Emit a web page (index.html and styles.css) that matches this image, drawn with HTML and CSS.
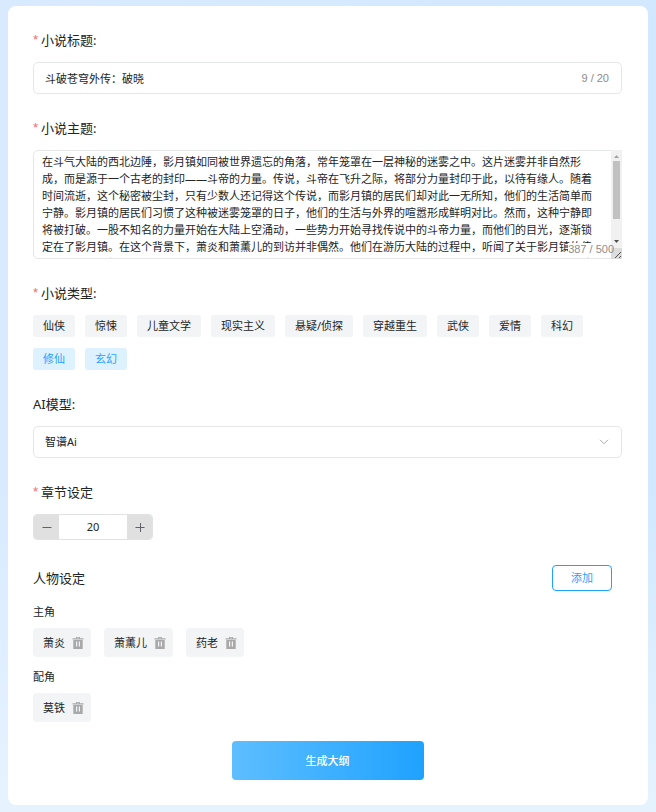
FILE: index.html
```html
<!DOCTYPE html>
<html lang="zh-CN">
<head>
  <meta charset="utf-8">
  <meta name="viewport" content="width=device-width, initial-scale=1">
  <title>小说设定</title>
  <link rel="stylesheet" href="styles.css">
</head>
<body>
  <svg class="sprite" aria-hidden="true">
    <symbol id="trash" viewBox="0 0 12 12">
      <path fill-rule="evenodd" d="M4 0h4v1.200h3.500v1.300H.5V1.200H4zM5 .8v.5h2V.8zM1.300 3h9.400v9H1.300zM4 4.500v5h1.200v-5zM6.800 4.500v5H8v-5z"/>
    </symbol>
  </svg>
  <form class="card">
    <div class="field">
      <label class="label required" for="title">小说标题:</label>
      <div class="input-box">
        <input class="input" id="title" type="text" maxlength="20" value="斗破苍穹外传：破晓">
        <span class="count">9 / 20</span>
      </div>
    </div>

    <div class="field">
      <label class="label required" for="theme">小说主题:</label>
      <div class="textarea-box">
        <textarea class="textarea" id="theme" maxlength="500">在斗气大陆的西北边陲，影月镇如同被世界遗忘的角落，常年笼罩在一层神秘的迷雾之中。这片迷雾并非自然形成，而是源于一个古老的封印——斗帝的力量。传说，斗帝在飞升之际，将部分力量封印于此，以待有缘人。随着时间流逝，这个秘密被尘封，只有少数人还记得这个传说，而影月镇的居民们却对此一无所知，他们的生活简单而宁静。影月镇的居民们习惯了这种被迷雾笼罩的日子，他们的生活与外界的喧嚣形成鲜明对比。然而，这种宁静即将被打破。一股不知名的力量开始在大陆上空涌动，一些势力开始寻找传说中的斗帝力量，而他们的目光，逐渐锁定在了影月镇。在这个背景下，萧炎和萧薰儿的到访并非偶然。他们在游历大陆的过程中，听闻了关于影月镇的传说，心中充满好奇，他们特别到此，萧炎怀揣着这个未解的谜团，不曾想，这个看似普通的小镇里，隐藏着足以改变整个大陆命运的秘密。</textarea>
        <svg class="scrollbar" viewBox="0 0 11 109" aria-hidden="true">
          <path class="track" d="M0 0h11v109H0z"/>
          <path class="thumb" d="M2 11h7v58H2z"/>
          <path class="arrow-off" d="M3 8l2.500-3L8 8z"/>
          <path class="arrow" d="M3 90h5l-2.500 3z"/>
          <path class="corner" d="M0 98h11v11H0z"/>
          <path class="grip" d="M4 108l6-6M8 108l2-2"/>
        </svg>
        <span class="count count-over">387 / 500</span>
      </div>
    </div>

    <div class="field">
      <span class="label required" id="genre">小说类型:</span>
      <div class="tags" role="group" aria-labelledby="genre">
        <button class="tag" type="button">仙侠</button>
        <button class="tag" type="button">惊悚</button>
        <button class="tag" type="button">儿童文学</button>
        <button class="tag" type="button">现实主义</button>
        <button class="tag" type="button">悬疑/侦探</button>
        <button class="tag" type="button">穿越重生</button>
        <button class="tag" type="button">武侠</button>
        <button class="tag" type="button">爱情</button>
        <button class="tag" type="button">科幻</button>
        <button class="tag active" type="button" aria-pressed="true">修仙</button>
        <button class="tag active" type="button" aria-pressed="true">玄幻</button>
      </div>
    </div>

    <div class="field">
      <label class="label" for="model">AI模型:</label>
      <div class="input-box">
        <select class="input" id="model"><option>智谱Ai</option></select>
        <svg class="chevron" viewBox="0 0 10 6" aria-hidden="true"><path d="M1 .8l4 4 4-4"/></svg>
      </div>
    </div>

    <div class="field">
      <label class="label required" for="chapters">章节设定</label>
      <div class="stepper">
        <button class="step" type="button" aria-label="减少"><svg viewBox="0 0 10 10"><path d="M.5 5.500h9"/></svg></button>
        <input class="step-value" id="chapters" type="text" inputmode="numeric" value="20">
        <button class="step" type="button" aria-label="增加"><svg viewBox="0 0 10 10"><path d="M.5 5.500h9M5.500 1v9"/></svg></button>
      </div>
    </div>

    <section class="roles">
      <header class="roles-head">
        <span class="label">人物设定</span>
        <button class="add" type="button">添加</button>
      </header>
      <div class="role">
        <span class="role-name">主角</span>
        <div class="chips">
          <span class="chip">萧炎<button class="remove" type="button" aria-label="删除"><svg><use href="#trash"/></svg></button></span>
          <span class="chip">萧薰儿<button class="remove" type="button" aria-label="删除"><svg><use href="#trash"/></svg></button></span>
          <span class="chip">药老<button class="remove" type="button" aria-label="删除"><svg><use href="#trash"/></svg></button></span>
        </div>
      </div>
      <div class="role">
        <span class="role-name">配角</span>
        <div class="chips">
          <span class="chip">莫铁<button class="remove" type="button" aria-label="删除"><svg><use href="#trash"/></svg></button></span>
        </div>
      </div>
    </section>

    <button class="submit" type="button">生成大纲</button>
  </form>
</body>
</html>
```
FILE: styles.css
```css
* {
  box-sizing: border-box;
}

body {
  margin: 0;
  padding: 6px 8px 7px;
  min-height: 100vh;
  background:
    linear-gradient(to bottom, transparent 60%, #e6f3ff),
    linear-gradient(to right, #d9eaff, #d1e8ff);
  color: #222426;
  font-family: "Noto Sans", "Noto Sans CJK SC", sans-serif;
  font-size: 11px;
  line-height: 20px;
}

button,
input,
select,
textarea {
  margin: 0;
  padding: 0;
  border: 0;
  background: none;
  color: inherit;
  font: inherit;
  outline: 0;
}

button {
  cursor: pointer;
}

svg {
  display: block;
}

.sprite {
  position: absolute;
  width: 0;
  height: 0;
}

.card {
  display: flex;
  flex-direction: column;
  padding: 24px 26px 25px 25px;
  border-radius: 8px;
  background: #fff;
}

.field {
  display: flex;
  flex-direction: column;
  gap: 12px;
  margin-bottom: 24px;
}

.label {
  display: flex;
  font-size: 13px;
  line-height: 20px;
}

.required::before {
  content: "*";
  margin-right: 3px;
  color: #f56c6c;
  font-family: "Liberation Sans", sans-serif;
}

.input-box {
  display: flex;
  align-items: center;
  height: 32px;
  padding: 0 12px 0 11px;
  border: 1px solid #e4e6e8;
  border-radius: 5px;
}

.input {
  flex: 1;
  min-width: 0;
  height: 30px;
  appearance: none;
}

.count {
  color: #8c8c8c;
  font-family: "Liberation Sans", sans-serif;
  line-height: 12px;
}

.chevron {
  width: 10px;
  height: 6px;
  fill: none;
  stroke: #a8abb2;
}

.textarea-box {
  position: relative;
  display: flex;
}

.textarea {
  flex: 1;
  min-width: 0;
  height: 109px;
  padding: 2px 24px 2px 8px;
  border: 1px solid #e4e6e8;
  border-radius: 5px;
  line-height: 17px;
  resize: none;
  scrollbar-width: none;
}

.scrollbar {
  position: absolute;
  top: 0;
  right: 0;
  width: 11px;
  height: 109px;
}

.track {
  fill: #f1f1f1;
}

.thumb {
  fill: #c1c1c1;
}

.arrow-off {
  fill: #a3a3a3;
}

.arrow {
  fill: #505050;
}

.corner {
  fill: #dcdcdc;
}

.grip {
  fill: none;
  stroke: #505050;
}

.count-over {
  position: absolute;
  right: 8px;
  bottom: 4px;
  background: linear-gradient(#fff, #fff) no-repeat 0 0 / calc(100% - 3px) 100%;
}

.tags {
  display: flex;
  flex-wrap: wrap;
  gap: 11px 10px;
}

.tag {
  height: 22px;
  padding: 0 10px;
  border-radius: 3px;
  background: #f3f4f6;
}

.active {
  background: #ddf1ff;
  color: #1fa2ff;
}

.stepper {
  display: flex;
  width: 120px;
  height: 26px;
  overflow: hidden;
  border: 1px solid #e0e2e4;
  border-radius: 4px;
}

.step {
  display: flex;
  align-items: center;
  justify-content: center;
  width: 25px;
  background: #e0e0e0;
}

.step svg {
  width: 10px;
  height: 10px;
  fill: none;
  stroke: #606266;
}

.step-value {
  flex: 1;
  min-width: 0;
  text-align: center;
}

.roles {
  display: flex;
  flex-direction: column;
  gap: 10px;
}

.roles-head {
  display: flex;
  align-items: center;
  justify-content: space-between;
  height: 28px;
  padding-right: 10px;
}

.add {
  width: 60px;
  height: 26px;
  border: 1px solid #1fa2ff;
  border-radius: 4px;
  color: #1fa2ff;
}

.role {
  display: flex;
  flex-direction: column;
  gap: 6px;
}

.chips {
  display: flex;
  flex-wrap: wrap;
  gap: 13px;
}

.chip {
  display: flex;
  align-items: center;
  gap: 7px;
  height: 29px;
  padding: 0 7px 0 10px;
  border-radius: 4px;
  background: #f3f4f6;
}

.remove svg {
  width: 12px;
  height: 12px;
  fill: #a9a9a9;
}

.submit {
  align-self: center;
  width: 192px;
  height: 39px;
  margin-top: 19px;
  border-radius: 4px;
  background: linear-gradient(to right, #5ebeff, #1fa2ff);
  color: #fff;
  font-weight: 500;
}
```
